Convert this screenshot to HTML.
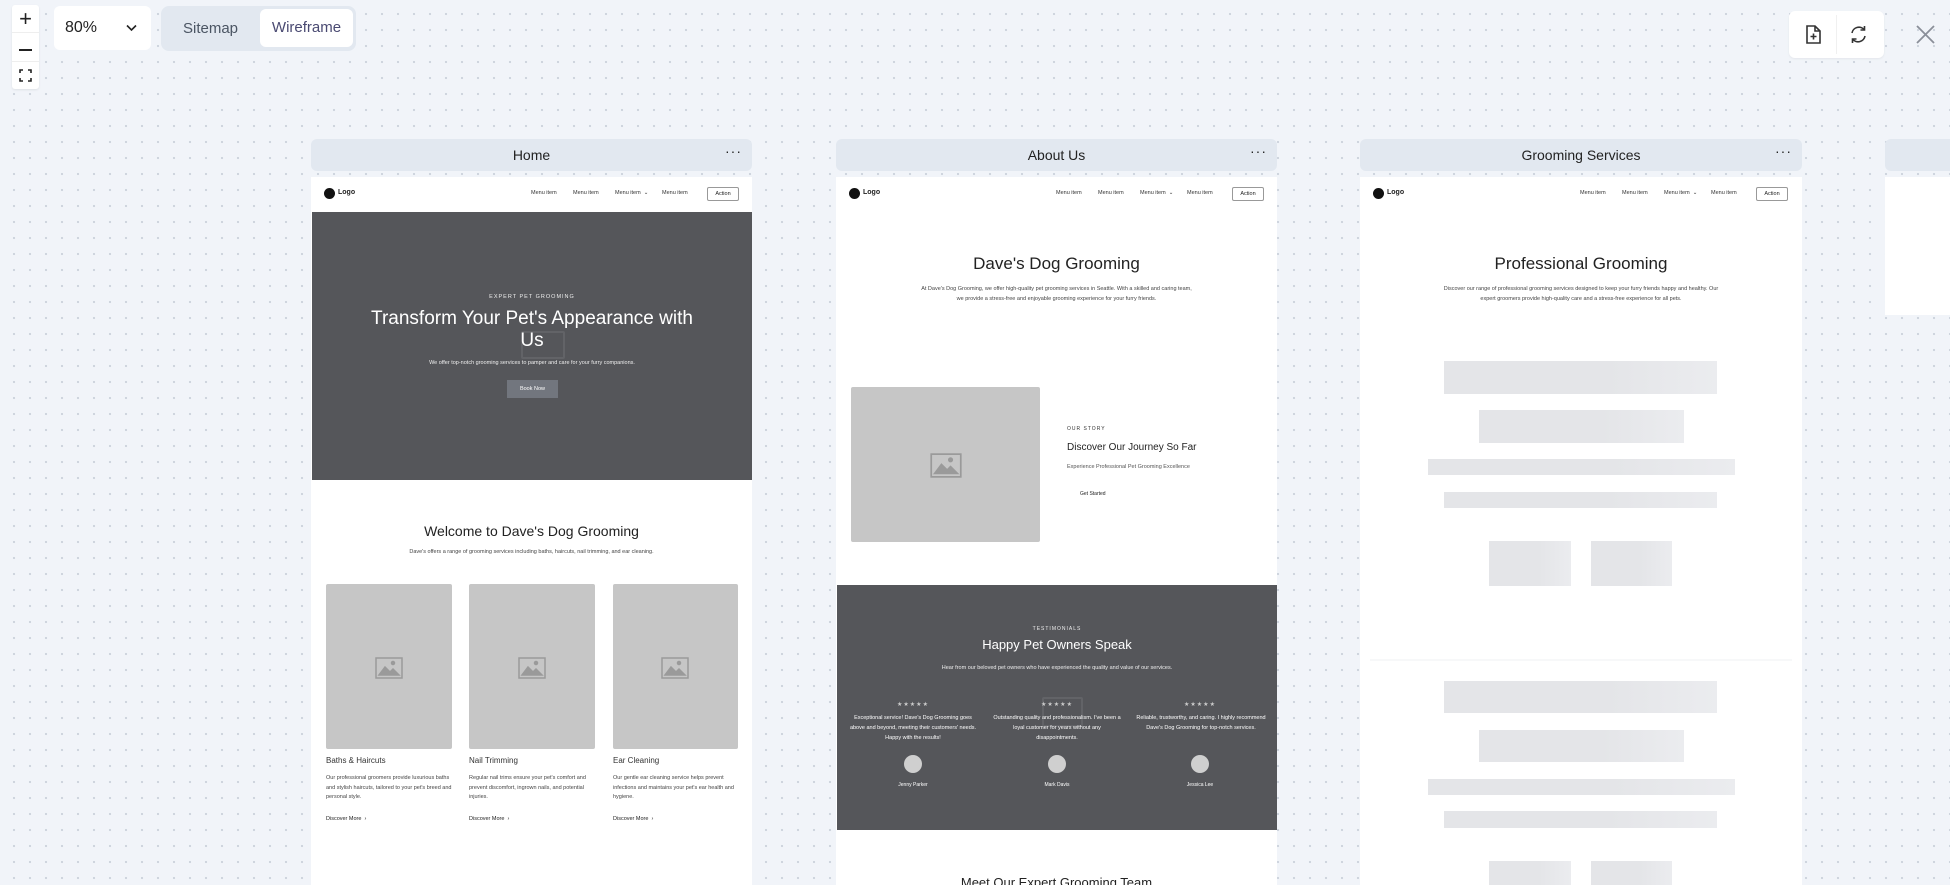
<!DOCTYPE html>
<html><head><meta charset="utf-8"><style>
*{box-sizing:border-box;margin:0;padding:0}
body{width:1950px;height:885px;overflow:hidden;position:relative;font-family:"Liberation Sans",sans-serif;background:#f1f4f9;background-image:radial-gradient(circle,#cdd3dd 1px,transparent 1.3px);background-size:16px 16px;background-position:6px 6px}
.a{position:absolute}
.hdr{position:absolute;top:139px;height:32px;background:#e2e8f0;border-radius:6px;font-size:14px;color:#222;text-align:center;line-height:32px}
.hdr .d{position:absolute;right:10px;top:-4px;font-size:14px;letter-spacing:1px}
.fr{position:absolute;top:177px;width:441px;height:708px;background:#fff;overflow:hidden}
.t{position:absolute;left:0;right:0;text-align:center;white-space:nowrap}
.ph{position:absolute;background:#c6c6c6;border-radius:2px}
.sk{position:absolute;background:linear-gradient(90deg,#e4e5e8,#e4e5e8 60%,#ebecef);}
</style></head><body>

<div class="a" style="left:12px;top:5px;width:27px;height:84px;background:#fff;border-radius:3px;box-shadow:0 1px 2px rgba(0,0,0,.08)">
 <div class="a" style="left:0;top:0;width:27px;height:28px;text-align:center;font-size:22px;line-height:28px;color:#222;border-bottom:1px solid #eee">+</div>
 <div class="a" style="left:7px;top:44px;width:13px;height:2px;background:#222"></div>
 <div class="a" style="left:0;top:56px;width:27px;height:1px;background:#eee"></div>
 <svg class="a" style="left:7px;top:64px" width="13" height="13" viewBox="0 0 13 13" fill="none" stroke="#222" stroke-width="1.6"><path d="M1 4V1h3M9 1h3v3M12 9v3H9M4 12H1V9"/></svg>
</div>
<div class="a" style="left:54px;top:6px;width:97px;height:44px;background:#fff;border-radius:6px;font-size:16px;color:#222;line-height:44px;padding-left:11px">80%
 <svg class="a" style="left:72px;top:18px" width="11" height="8" viewBox="0 0 11 8" fill="none" stroke="#222" stroke-width="1.6"><path d="M1 1.5l4.5 4.5 4.5-4.5"/></svg></div>
<div class="a" style="left:161px;top:6px;width:195px;height:45px;background:#e2e8f0;border-radius:8px">
 <div class="a" style="left:22px;top:0;line-height:45px;font-size:15px;color:#4b5563">Sitemap</div>
 <div class="a" style="left:99px;top:3px;width:93px;height:38px;background:#fff;border-radius:6px;line-height:38px;text-align:center;font-size:15px;color:#4a4a72">Wireframe</div>
</div>
<div class="a" style="left:1789px;top:11px;width:95px;height:47px;background:#fff;border-radius:6px;box-shadow:0 1px 2px rgba(0,0,0,.06)">
 <div class="a" style="left:47px;top:4px;width:1px;height:39px;background:#f0f0f0"></div>
 <svg class="a" style="left:16px;top:14px" width="17" height="19" viewBox="0 0 17 19" fill="none" stroke="#333" stroke-width="1.6"><path d="M2 1h8l5 5v12H2z"/><path d="M10 1v5h5M8.5 8.5v6M5.5 11.5h6"/></svg>
 <svg class="a" style="left:60px;top:14px" width="19" height="19" viewBox="0 0 19 19" fill="none" stroke="#333" stroke-width="1.6"><path d="M3 8a7 7 0 0 1 12.5-3M16 11a7 7 0 0 1-12.5 3"/><path d="M15.5 1v4h-4M3.5 18v-4h4"/></svg>
</div>
<svg class="a" style="left:1916px;top:25px" width="19" height="19" viewBox="0 0 19 19" stroke="#8a8f99" stroke-width="1.8"><path d="M1 1l17 17M18 1L1 18"/></svg>

<!-- Home -->
<div class="hdr" style="left:311px;width:441px">Home<span class="d">···</span></div>
<div class="fr" style="left:311px">
 <div class="a" style="left:13px;top:11px;width:11px;height:11px;border-radius:50%;background:#111"></div>
 <div class="a" style="left:27px;top:12px;font-size:7px;font-weight:bold;color:#222">Logo</div>
 <div class="a" style="left:220px;top:13px;font-size:5.5px;color:#333">Menu item</div>
 <div class="a" style="left:262px;top:13px;font-size:5.5px;color:#333">Menu item</div>
 <div class="a" style="left:304px;top:13px;font-size:5.5px;color:#333">Menu item &nbsp;⌄</div>
 <div class="a" style="left:351px;top:13px;font-size:5.5px;color:#333">Menu item</div>
 <div class="a" style="left:396px;top:10px;width:32px;height:14px;border:1px solid #999;border-radius:2px;font-size:5.5px;text-align:center;line-height:12px;color:#222">Action</div>
 <div class="a" style="left:1px;top:35px;width:440px;height:268px;background:#55565a">
  <div class="a" style="left:209px;top:119px;width:44px;height:28px;border:2px solid #626367;border-radius:2px"></div>
  <div class="t" style="top:82px;font-size:5.5px;letter-spacing:1px;color:#eee">EXPERT PET GROOMING</div>
  <div class="t" style="top:96px;font-size:19px;line-height:22px;color:#fff;white-space:normal;padding:0 50px">Transform Your Pet's Appearance with Us</div>
  <div class="t" style="top:148px;font-size:5.5px;color:#eee">We offer top-notch grooming services to pamper and care for your furry companions.</div>
  <div class="a" style="left:195px;top:168px;width:51px;height:18px;background:#72767e;font-size:5.5px;color:#fff;text-align:center;line-height:18px">Book Now</div>
 </div>
 <div class="t" style="top:346px;font-size:14px;color:#222">Welcome to Dave's Dog Grooming</div>
 <div class="t" style="top:372px;font-size:5.5px;color:#444">Dave's offers a range of grooming services including baths, haircuts, nail trimming, and ear cleaning.</div>
 <div class="ph" style="left:15px;top:407px;width:126px;height:165px"></div>
 <div class="ph" style="left:158px;top:407px;width:126px;height:165px"></div>
 <div class="ph" style="left:302px;top:407px;width:125px;height:165px"></div>
 <svg class="a" style="left:64px;top:480px" width="28" height="22" viewBox="0 0 28 22" fill="none" stroke="#9a9a9a" stroke-width="1.5"><rect x="1" y="1" width="26" height="20"/><path d="M4 18l6-8 5 5 3-3 6 6z" fill="#9a9a9a"/><circle cx="18" cy="6" r="1.5" fill="#9a9a9a"/></svg>
 <svg class="a" style="left:207px;top:480px" width="28" height="22" viewBox="0 0 28 22" fill="none" stroke="#9a9a9a" stroke-width="1.5"><rect x="1" y="1" width="26" height="20"/><path d="M4 18l6-8 5 5 3-3 6 6z" fill="#9a9a9a"/><circle cx="18" cy="6" r="1.5" fill="#9a9a9a"/></svg>
 <svg class="a" style="left:350px;top:480px" width="28" height="22" viewBox="0 0 28 22" fill="none" stroke="#9a9a9a" stroke-width="1.5"><rect x="1" y="1" width="26" height="20"/><path d="M4 18l6-8 5 5 3-3 6 6z" fill="#9a9a9a"/><circle cx="18" cy="6" r="1.5" fill="#9a9a9a"/></svg>
 <div class="a" style="left:15px;top:579px;font-size:8px;color:#333">Baths &amp; Haircuts</div>
 <div class="a" style="left:158px;top:579px;font-size:8px;color:#333">Nail Trimming</div>
 <div class="a" style="left:302px;top:579px;font-size:8px;color:#333">Ear Cleaning</div>
 <div class="a" style="left:15px;top:597px;width:126px;font-size:5.5px;line-height:9.5px;color:#444">Our professional groomers provide luxurious baths and stylish haircuts, tailored to your pet's breed and personal style.</div>
 <div class="a" style="left:158px;top:597px;width:126px;font-size:5.5px;line-height:9.5px;color:#444">Regular nail trims ensure your pet's comfort and prevent discomfort, ingrown nails, and potential injuries.</div>
 <div class="a" style="left:302px;top:597px;width:126px;font-size:5.5px;line-height:9.5px;color:#444">Our gentle ear cleaning service helps prevent infections and maintains your pet's ear health and hygiene.</div>
 <div class="a" style="left:15px;top:639px;font-size:5.5px;color:#222">Discover More &nbsp;›</div>
 <div class="a" style="left:158px;top:639px;font-size:5.5px;color:#222">Discover More &nbsp;›</div>
 <div class="a" style="left:302px;top:639px;font-size:5.5px;color:#222">Discover More &nbsp;›</div>
</div>

<!-- About -->
<div class="hdr" style="left:836px;width:441px">About Us<span class="d">···</span></div>
<div class="fr" style="left:836px">
 <div class="a" style="left:13px;top:11px;width:11px;height:11px;border-radius:50%;background:#111"></div>
 <div class="a" style="left:27px;top:12px;font-size:7px;font-weight:bold;color:#222">Logo</div>
 <div class="a" style="left:220px;top:13px;font-size:5.5px;color:#333">Menu item</div>
 <div class="a" style="left:262px;top:13px;font-size:5.5px;color:#333">Menu item</div>
 <div class="a" style="left:304px;top:13px;font-size:5.5px;color:#333">Menu item &nbsp;⌄</div>
 <div class="a" style="left:351px;top:13px;font-size:5.5px;color:#333">Menu item</div>
 <div class="a" style="left:396px;top:10px;width:32px;height:14px;border:1px solid #999;border-radius:2px;font-size:5.5px;text-align:center;line-height:12px;color:#222">Action</div>
 <div class="t" style="top:77px;font-size:17px;color:#222">Dave's Dog Grooming</div>
 <div class="t" style="top:108px;font-size:5.5px;line-height:9.5px;color:#444">At Dave's Dog Grooming, we offer high-quality pet grooming services in Seattle. With a skilled and caring team,<br>we provide a stress-free and enjoyable grooming experience for your furry friends.</div>
 <div class="ph" style="left:15px;top:210px;width:189px;height:155px"></div>
 <svg class="a" style="left:94px;top:276px" width="32" height="25" viewBox="0 0 28 22" fill="none" stroke="#9a9a9a" stroke-width="1.5"><rect x="1" y="1" width="26" height="20"/><path d="M4 18l6-8 5 5 3-3 6 6z" fill="#9a9a9a"/><circle cx="18" cy="6" r="1.5" fill="#9a9a9a"/></svg>
 <div class="a" style="left:231px;top:249px;font-size:5px;letter-spacing:1px;color:#333">OUR STORY</div>
 <div class="a" style="left:231px;top:265px;font-size:10px;color:#222">Discover Our Journey So Far</div>
 <div class="a" style="left:231px;top:287px;font-size:5.5px;color:#555">Experience Professional Pet Grooming Excellence</div>
 <div class="a" style="left:244px;top:314px;font-size:5px;color:#222">Get Started</div>
 <div class="a" style="left:1px;top:408px;width:440px;height:245px;background:#55565a">
  <div class="a" style="left:205px;top:112px;width:41px;height:30px;border:2px solid #626367;border-radius:2px"></div>
  <div class="t" style="top:41px;font-size:5px;letter-spacing:1px;color:#eee">TESTIMONIALS</div>
  <div class="t" style="top:52px;font-size:13px;color:#fff">Happy Pet Owners Speak</div>
  <div class="t" style="top:80px;font-size:5.5px;color:#eee">Hear from our beloved pet owners who have experienced the quality and value of our services.</div>
  <div class="a" style="left:11px;top:116px;width:130px;text-align:center;color:#ccc;font-size:6px;letter-spacing:1px">★★★★★</div>
  <div class="a" style="left:155px;top:116px;width:130px;text-align:center;color:#ccc;font-size:6px;letter-spacing:1px">★★★★★</div>
  <div class="a" style="left:298px;top:116px;width:130px;text-align:center;color:#ccc;font-size:6px;letter-spacing:1px">★★★★★</div>
  <div class="a" style="left:11px;top:128px;width:130px;text-align:center;color:#fff;font-size:5.5px;line-height:10px">Exceptional service! Dave's Dog Grooming goes above and beyond, meeting their customers' needs. Happy with the results!</div>
  <div class="a" style="left:155px;top:128px;width:130px;text-align:center;color:#fff;font-size:5.5px;line-height:10px">Outstanding quality and professionalism. I've been a loyal customer for years without any disappointments.</div>
  <div class="a" style="left:298px;top:128px;width:132px;text-align:center;color:#fff;font-size:5.5px;line-height:10px">Reliable, trustworthy, and caring. I highly recommend Dave's Dog Grooming for top-notch services.</div>
  <div class="a" style="left:67px;top:170px;width:18px;height:18px;border-radius:50%;background:#cfcfcf"></div>
  <div class="a" style="left:211px;top:170px;width:18px;height:18px;border-radius:50%;background:#cfcfcf"></div>
  <div class="a" style="left:354px;top:170px;width:18px;height:18px;border-radius:50%;background:#cfcfcf"></div>
  <div class="a" style="left:11px;top:197px;width:130px;text-align:center;color:#fff;font-size:5px">Jenny Parker</div>
  <div class="a" style="left:155px;top:197px;width:130px;text-align:center;color:#fff;font-size:5px">Mark Davis</div>
  <div class="a" style="left:298px;top:197px;width:130px;text-align:center;color:#fff;font-size:5px">Jessica Lee</div>
 </div>
 <div class="t" style="top:698px;font-size:13px;color:#222">Meet Our Expert Grooming Team</div>
</div>

<!-- Grooming -->
<div class="hdr" style="left:1360px;width:442px">Grooming Services<span class="d">···</span></div>
<div class="fr" style="left:1360px;width:442px">
 <div class="a" style="left:13px;top:11px;width:11px;height:11px;border-radius:50%;background:#111"></div>
 <div class="a" style="left:27px;top:12px;font-size:7px;font-weight:bold;color:#222">Logo</div>
 <div class="a" style="left:220px;top:13px;font-size:5.5px;color:#333">Menu item</div>
 <div class="a" style="left:262px;top:13px;font-size:5.5px;color:#333">Menu item</div>
 <div class="a" style="left:304px;top:13px;font-size:5.5px;color:#333">Menu item &nbsp;⌄</div>
 <div class="a" style="left:351px;top:13px;font-size:5.5px;color:#333">Menu item</div>
 <div class="a" style="left:396px;top:10px;width:32px;height:14px;border:1px solid #999;border-radius:2px;font-size:5.5px;text-align:center;line-height:12px;color:#222">Action</div>
 <div class="t" style="top:77px;font-size:17px;color:#222">Professional Grooming</div>
 <div class="t" style="top:108px;font-size:5.5px;line-height:9.5px;color:#444">Discover our range of professional grooming services designed to keep your furry friends happy and healthy. Our<br>expert groomers provide high-quality care and a stress-free experience for all pets.</div>
 <div class="sk" style="left:84px;top:184px;width:273px;height:33px"></div>
 <div class="sk" style="left:119px;top:233px;width:205px;height:33px"></div>
 <div class="sk" style="left:68px;top:282px;width:307px;height:16px"></div>
 <div class="sk" style="left:84px;top:315px;width:273px;height:16px"></div>
 <div class="sk" style="left:129px;top:364px;width:82px;height:45px"></div>
 <div class="sk" style="left:231px;top:364px;width:81px;height:45px"></div>
 <div class="a" style="left:10px;top:482px;width:422px;height:2px;background:#f7f8f9"></div>
 <div class="sk" style="left:84px;top:504px;width:273px;height:32px"></div>
 <div class="sk" style="left:119px;top:553px;width:205px;height:32px"></div>
 <div class="sk" style="left:68px;top:602px;width:307px;height:16px"></div>
 <div class="sk" style="left:84px;top:634px;width:273px;height:17px"></div>
 <div class="sk" style="left:129px;top:684px;width:82px;height:40px"></div>
 <div class="sk" style="left:231px;top:684px;width:81px;height:40px"></div>
</div>

<div class="hdr" style="left:1885px;width:100px"></div>
<div class="a" style="left:1885px;top:177px;width:70px;height:138px;background:#fff"></div>
</body></html>
